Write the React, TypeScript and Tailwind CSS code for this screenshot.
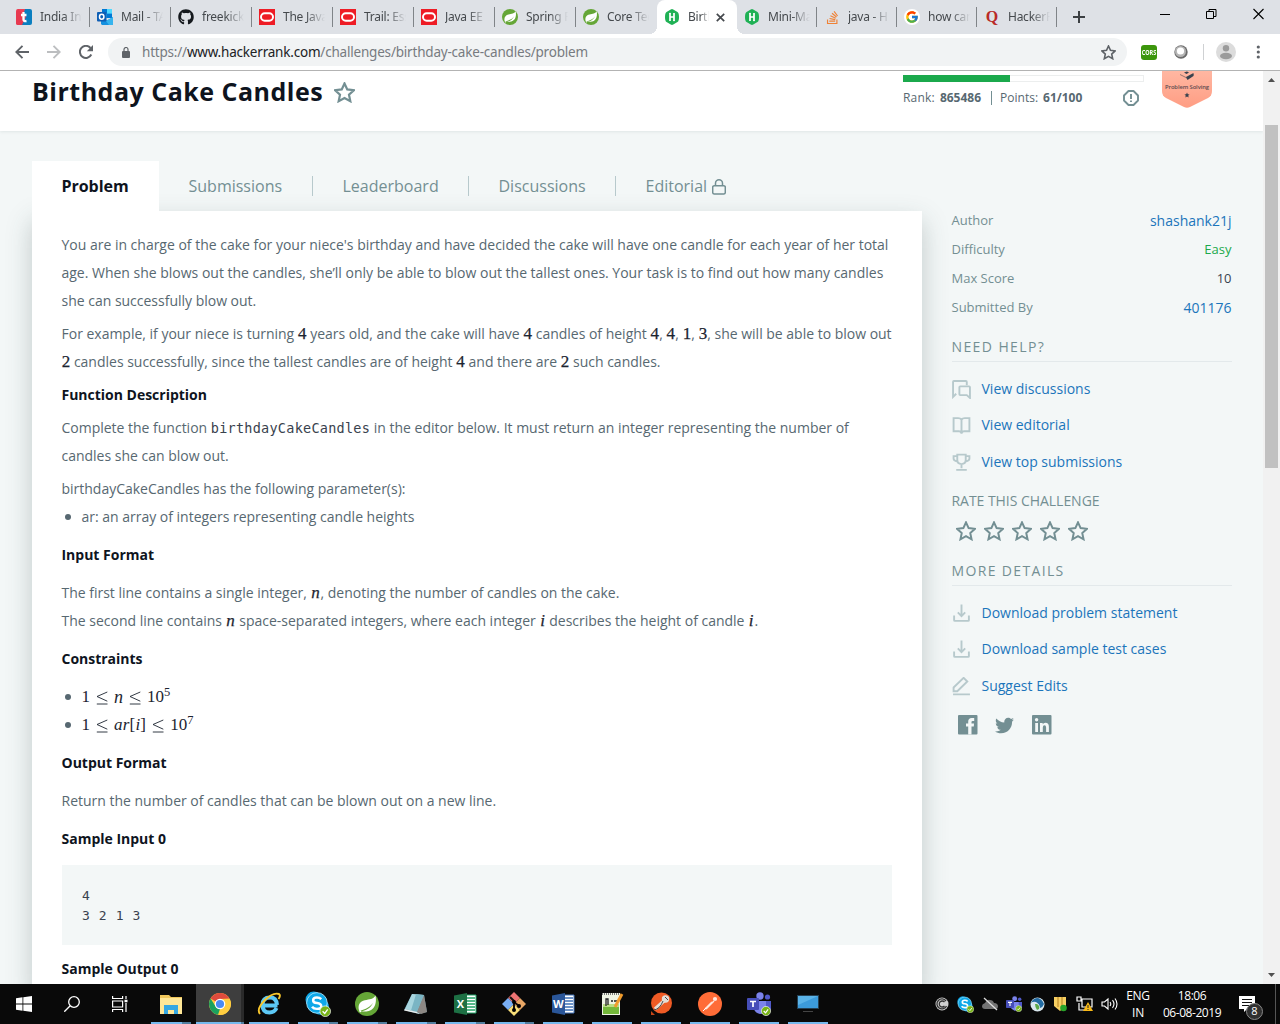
import React from "react";
import { FcGoogle } from "react-icons/fc";
import { FaGithub, FaStackOverflow, FaTwitter } from "react-icons/fa";
import type { ReactNode } from "react";

const OracleIcon = () => (
  <svg width="16" height="16" viewBox="0 0 16 16">
    <rect width="16" height="16" fill="#ee1c25" />
    <rect x="2" y="4.300" width="12" height="7.400" rx="3.700" fill="none" stroke="#fff" strokeWidth="2" />
  </svg>
);

const LeafIcon = ({ size = 16 }: { size?: number }) => (
  <svg width={size} height={size} viewBox="0 0 24 24">
    <circle cx="12" cy="12" r="12" fill="#65a637" />
    <path d="M20.500 3.500c.9 4.500.6 9.500-2.300 12.800-3.400 3.900-8.700 3.200-13.200 3.200 6.500-.7 10.500-3.500 13.200-8.800-3.300 4.300-7 6.300-14 8.200C2.300 13 5 9.300 9.800 8.200 14.500 7.300 18.300 7.300 20.500 3.500z" fill="#fff" />
    <circle cx="5.300" cy="19.300" r="1" fill="#fff" />
  </svg>
);

const HackerIcon = () => (
  <svg width="16" height="16" viewBox="0 0 16 16">
    <path d="M8 0q.7 0 5.500 2.900Q15 3.800 15 8t-1.500 5.100Q8.700 16 8 16t-5.500-2.900Q1 12.200 1 8t1.500-5.100Q7.300 0 8 0z" fill="#1fb155" />
    <path d="M6 4v8M10 4v8M6 8h4" stroke="#fff" strokeWidth="1.700" fill="none" />
    <path d="M4.800 4.800L6 3.400l1.200 1.400M8.800 11.200l1.200 1.400 1.200-1.400" fill="#fff" />
  </svg>
);

const TimesIcon = () => (
  <svg width="16" height="16" viewBox="0 0 16 16">
    <path d="M0 2q0-2 2-2h7L8 16H2q-2 0-2-2z" fill="#ef4056" />
    <path d="M9 0h5q2 0 2 2v12q0 2-2 2H4z" fill="#0b7fc0" />
    <path d="M2 0L0 4v10q0 2 2 2h4l4-8z" fill="#e73950" />
    <path d="M7.500 3v7.500q0 2 3 1.500M5 6h5.500" stroke="#fff" strokeWidth="2.300" fill="none" />
  </svg>
);

const OutlookIcon = () => (
  <svg width="17" height="16" viewBox="0 0 17 16" className="shrink-0">
    <path d="M5 0h10v9H5z" fill="#28a8ea" />
    <path d="M5 0h5v4.500H5zM10 4.500h5V9h-5z" fill="#0078d4" />
    <path d="M10 0h5v4.500h-5z" fill="#50d9ff" />
    <path d="M4 15V8l6 3.500L16 8v7q0 1-1 1H5z" fill="#1490df" />
    <path d="M16 8v7q0 1-1 1h-3l-3-4z" fill="#36b4ee" />
    <rect y="3" width="9.500" height="9.500" rx="1" fill="#0f5fb5" />
    <ellipse cx="4.700" cy="7.700" rx="2.200" ry="2.500" fill="none" stroke="#fff" strokeWidth="1.500" />
  </svg>
);

const tabs: { label: string; icon: ReactNode; active?: boolean; noSep?: boolean; narrow?: boolean }[] = [
  { label: "India Int", icon: <TimesIcon /> },
  { label: "Mail - TA", icon: <OutlookIcon /> },
  { label: "freekick", icon: <FaGithub size={16} color="#15191d" /> },
  { label: "The Java", icon: <OracleIcon /> },
  { label: "Trail: Ess", icon: <OracleIcon /> },
  { label: "Java EE", icon: <OracleIcon /> },
  { label: "Spring F", icon: <LeafIcon /> },
  { label: "Core Tec", icon: <LeafIcon />, noSep: true },
  { label: "Birth", icon: <HackerIcon />, active: true, noSep: true, narrow: true },
  { label: "Mini-Ma", icon: <HackerIcon />, narrow: true },
  { label: "java - H", icon: <FaStackOverflow size={15} color="#ef8236" />, narrow: true },
  { label: "how can", icon: <span className="flex size-4 items-center justify-center rounded-full bg-white"><FcGoogle size={14} /></span>, narrow: true },
  { label: "HackerR", icon: <span className="w-4 text-center font-['Liberation_Serif',serif] text-[16px] leading-4 font-bold text-[#b92b27]">Q</span>, narrow: true },
];

const TabStrip = () => (
  <div className="relative flex h-[34px] shrink-0 bg-[#dee1e6] pl-[9px]">
    {tabs.map((t, i) => (
      <div key={i} className={`relative flex h-[34px] shrink-0 items-center pl-[7px] ${t.narrow ? "w-[80px]" : "w-[81px]"} ${t.active ? "rounded-t-lg bg-white" : ""}`}>
        {t.active && (
          <>
            <span className="absolute bottom-0 -left-2 size-2 bg-[radial-gradient(circle_at_0_0,transparent_8px,#fff_8px)]" />
            <span className="absolute -right-2 bottom-0 size-2 bg-[radial-gradient(circle_at_100%_0,transparent_8px,#fff_8px)]" />
          </>
        )}
        <span className="flex w-4 shrink-0 justify-center">{t.icon}</span>
        <span className={`ml-2 overflow-hidden text-[12px] tracking-[-0.25px] whitespace-nowrap text-[#45494d] ${t.active ? "w-[21px] [mask-image:linear-gradient(to_right,black_60%,transparent)]" : "w-[42px] [mask-image:linear-gradient(to_right,black_55%,transparent)]"}`}>{t.label}</span>
        {t.active && (
          <svg className="ml-[7px]" width="9" height="9" viewBox="0 0 9 9"><path d="M.8.8l7.400 7.400M8.200.8L.8 8.200" stroke="#45494d" strokeWidth="1.700" /></svg>
        )}
        {!t.noSep && <span className="absolute top-[7px] right-0 h-5 w-px bg-[#808488]" />}
      </div>
    ))}
    <svg className="mt-[11px] ml-4" width="12" height="12" viewBox="0 0 12 12"><path d="M6 0v12M0 6h12" stroke="#3c4043" strokeWidth="2" /></svg>
    <div className="absolute top-2 right-4 flex items-center gap-[36px]">
      <svg width="10" height="12" viewBox="0 0 10 12"><path d="M0 6.500h10" stroke="#000" /></svg>
      <svg width="11" height="12" viewBox="0 0 11 12"><path d="M.5 3.500h7v7h-7zM3 3.500V1.500h7v7H8" fill="none" stroke="#000" /></svg>
      <svg width="11" height="12" viewBox="0 0 11 12"><path d="M.5 1l10 10M10.500 1l-10 10" stroke="#000" strokeWidth="1.100" /></svg>
    </div>
  </div>
);

const STAR = "M12 2.500l2.900 6.300 6.900.8-5.100 4.700 1.400 6.800L12 17.700l-6.100 3.400 1.400-6.800-5.100-4.700 6.900-.8z";

const Star = ({ size, color, w = 2 }: { size: number; color: string; w?: number }) => (
  <svg width={size} height={size} viewBox="1 1 22 22" fill="none" stroke={color} strokeWidth={w}><path d={STAR} /></svg>
);

const AddressBar = () => (
  <div className="flex h-9 shrink-0 items-center bg-white">
    <svg className="ml-[15px]" width="14" height="14" viewBox="0 0 14 14" fill="none" stroke="#5f6368" strokeWidth="1.900"><path d="M14 7H1.500M7.500.8L1.300 7l6.200 6.200" /></svg>
    <svg className="ml-[18px]" width="14" height="14" viewBox="0 0 14 14" fill="none" stroke="#bcbec0" strokeWidth="1.900"><path d="M0 7h12.500M6.500.8L12.700 7l-6.200 6.200" /></svg>
    <svg className="ml-[18px]" width="14" height="14" viewBox="0 0 14 14"><path d="M12.300 9.500A6 6 0 1 1 11.500 3" fill="none" stroke="#5f6368" strokeWidth="2" /><path d="M14 0v6.200H7.800z" fill="#5f6368" /></svg>
    <div className="ml-[15px] flex h-7 w-[1019px] items-center rounded-full bg-[#f1f3f4] pl-[14px]">
      <svg width="8" height="11" viewBox="0 0 8 11"><rect y="4" width="8" height="7" rx="1" fill="#5f6368" /><path d="M2 4V2.500a2 2 0 0 1 4 0V4" fill="none" stroke="#5f6368" strokeWidth="1.200" /></svg>
      <span className="ml-3 text-[13.500px] tracking-[-0.2px] whitespace-nowrap text-[#777b80]">https://<span className="text-[#202124]">www.hackerrank.com</span>/challenges/birthday-cake-candles/problem</span>
      <span className="mr-[11px] ml-auto"><Star size={15} color="#5f6368" w={2.4} /></span>
    </div>
    <span className="ml-[14px] flex h-[15px] w-4 items-center justify-center rounded-[3px] bg-[#3c960c] text-white"><span className="scale-y-[1.4] text-[5.500px] font-bold">CORS</span></span>
    <svg className="ml-[17px]" width="14" height="14" viewBox="0 0 14 14"><circle cx="7" cy="7" r="6.700" fill="#6b6b6b" /><circle cx="6.500" cy="6.500" r="5.500" fill="#b5b5b5" /><circle cx="6.500" cy="6" r="3.600" fill="#fff" /></svg>
    <span className="ml-[15px] h-4 w-px bg-[#cfd1d3]" />
    <svg className="ml-3" width="20" height="20" viewBox="0 0 20 20"><circle cx="10" cy="10" r="10" fill="#dcdcdc" /><circle cx="10" cy="6.300" r="3.200" fill="#9b9b9b" /><ellipse cx="10" cy="14" rx="6" ry="3.200" fill="#9b9b9b" /></svg>
    <svg className="ml-5" width="4" height="14" viewBox="0 0 4 14" fill="#5f6368"><circle cx="2.300" cy="2" r="1.600" /><circle cx="2.300" cy="7" r="1.600" /><circle cx="2.300" cy="12" r="1.600" /></svg>
  </div>
);

const Header = () => (
  <div className="flex h-[60px] items-start bg-white pl-8 shadow-[0_1px_3px_rgba(60,90,90,0.1)]">
    <h1 className="mt-[3px] w-[291px] text-[25px] leading-[34px] font-bold tracking-[0.5px] whitespace-nowrap text-[#0e141e]">Birthday Cake Candles</h1>
    <span className="mt-[11px] ml-[10.500px]"><Star size={21} color="#738f93" w={2.3} /></span>
    <div className="mt-1 ml-auto w-[241px]">
      <div className="h-[7px] border border-[#eceeee] bg-white"><div className="-mt-px -ml-px h-[7px] w-[107px] bg-[#1ba94c]" /></div>
      <div className="mt-[7px] flex h-[18px] items-center text-[12px] whitespace-nowrap text-[#576871]">
        <span className="tracking-[0.2px]">Rank:</span><b className="ml-[5px] font-bold">865486</b>
        <span className="mr-2 ml-[10px] h-[14px] w-px bg-[#738f93]" />
        <span>Points:</span><b className="ml-[5px] font-bold">61/100</b>
        <svg className="mr-[5px] ml-auto" width="16" height="16" viewBox="0 0 16 16" fill="none" stroke="#738f93" strokeWidth="1.900"><path d="M5.500 1h5l4.500 4.500v5L10.500 15h-5L1 10.500v-5z" strokeLinejoin="round" /><path d="M8 4v5M8 10.500V12" /></svg>
      </div>
    </div>
    <svg className="mr-[51px] ml-[18px]" width="50" height="37" viewBox="0 0 50 37">
      <defs><linearGradient id="badge" x1="0" y1="0" x2="0" y2="1"><stop offset="0" stopColor="#ffb7a2" /><stop offset="1" stopColor="#ff9d83" /></linearGradient></defs>
      <path d="M0 0h50v20q0 5-4 7L28 36q-3 1.500-6 0L4 27q-4-2-4-7z" fill="url(#badge)" />
      <path d="M18 3.500l8 4 6-4" fill="none" stroke="#7d6462" strokeWidth=".8" />
      <path d="M24 6l7.500-4v3l-6 4z" fill="#39424e" /><path d="M22 1.500l3-1 2 1-2.500 1.500z" fill="#39424e" />
      <text x="3" y="18" fontFamily="Open Sans, sans-serif" fontSize="5.800" fontWeight="600" textLength="44" fill="#5b4a50">Problem Solving</text>
      <path d="M25 21.500l.8 1.700 1.800.2-1.300 1.200.3 1.800-1.600-.9-1.600.9.300-1.800-1.300-1.200 1.800-.2z" fill="#39424e" />
    </svg>
  </div>
);

const M = ({ children, i = false }: { children: ReactNode; i?: boolean }) => (
  <span className={`inline-block font-['Liberation_Serif',serif] text-[17px] leading-5 text-[#1c2430] [-webkit-text-stroke:0.25px_#1c2430] ${i ? "px-[0.800px] italic" : "px-[0.150px]"}`}>{children}</span>
);

const H = ({ children, className = "" }: { children: ReactNode; className?: string }) => (
  <h3 className={`font-bold whitespace-nowrap text-[#0e141e] ${className}`}>{children}</h3>
);

const Bullet = ({ children }: { children: ReactNode }) => (
  <li className="flex h-7 items-center"><span className="mr-[11px] ml-[3px] size-[6px] rounded-full bg-[#576871]" />{children}</li>
);

const Leq = () => (
  <svg className="mx-[6px] mt-px shrink-0" width="12" height="14" viewBox="0 0 12 14" fill="none" stroke="#1c2430" strokeWidth=".9"><path d="M11.300 1L1 5.500l10.300 4.700M.8 13h10.700" /></svg>
);

const Formula = ({ children, power }: { children: ReactNode; power: string }) => (
  <span className="flex items-center font-['Liberation_Serif',serif] text-[17px] text-[#1c2430]">
    1<Leq />{children}<Leq />10<span className="mb-[9px] text-[12.500px] leading-none">{power}</span>
  </span>
);

const ProblemCard = () => (
  <div className="h-[780px] w-[890px] bg-white pt-5 pr-[30px] pl-[29.500px] text-[14px] leading-7 tracking-[-0.01px] whitespace-nowrap text-[#576871] shadow-[0_10px_24px_rgba(50,75,75,0.26)]">
    <p>
      <span className="block">You are in charge of the cake for your niece's birthday and have decided the cake will have one candle for each year of her total</span>
      <span className="block">age. When she blows out the candles, she’ll only be able to blow out the tallest ones. Your task is to find out how many candles</span>
      <span className="block">she can successfully blow out.</span>
    </p>
    <p className="mt-[5px]">
      <span className="block h-7">For example, if your niece is turning <M>4</M> years old, and the cake will have <M>4</M> candles of height <M>4</M>, <M>4</M>, <M>1</M>, <M>3</M>, she will be able to blow out</span>
      <span className="block h-7"><M>2</M> candles successfully, since the tallest candles are of height <M>4</M> and there are <M>2</M> such candles.</span>
    </p>
    <H className="mt-[5px]">Function Description</H>
    <p className="mt-[5px]">
      <span className="block h-7">Complete the function <code className="font-['DejaVu_Sans_Mono',monospace] text-[13.500px] tracking-[0.26px] text-[#39424e]">birthdayCakeCandles</code> in the editor below. It must return an integer representing the number of</span>
      <span className="block h-7">candles she can blow out.</span>
    </p>
    <p className="mt-[5px]">birthdayCakeCandles has the following parameter(s):</p>
    <ul><Bullet>ar: an array of integers representing candle heights</Bullet></ul>
    <H className="mt-[10px]">Input Format</H>
    <p className="mt-[10px]">
      <span className="block h-7">The first line contains a single integer, <M i>n</M>, denoting the number of candles on the cake.</span>
      <span className="block h-7">The second line contains <M i>n</M> space-separated integers, where each integer <M i>i</M> describes the height of candle <M i>i</M>.</span>
    </p>
    <H className="mt-[10px]">Constraints</H>
    <ul className="mt-[10px]">
      <Bullet><Formula power="5"><i className="text-[18px]">n</i></Formula></Bullet>
      <Bullet><Formula power="7"><span className="flex items-center tracking-[0.2px]"><i>ar</i>[<i>i</i>]</span></Formula></Bullet>
    </ul>
    <H className="mt-[10px]">Output Format</H>
    <p className="mt-[10px]">Return the number of candles that can be blown out on a new line.</p>
    <H className="mt-[10px]">Sample Input 0</H>
    <pre className="mt-3 ml-[0.500px] h-20 bg-[#f3f7f7] px-5 pt-[21px] font-['DejaVu_Sans_Mono',monospace] text-[13px] leading-5 tracking-[0.580px] text-[#39424e]">{"4\n3 2 1 3"}</pre>
    <H className="mt-[10px]">Sample Output 0</H>
  </div>
);

const navTabs = [
  { label: "Submissions", cls: "w-[154px]" },
  { label: "Leaderboard", cls: "w-[156px]" },
  { label: "Discussions", cls: "w-[147px]" },
];

const TabNav = () => (
  <div className="relative z-10 flex h-[50px] w-[890px] text-[16px] leading-[50px] text-[#738f93]">
    <div className="w-[127px] bg-white pl-[29.500px] font-bold tracking-[-0.050px] text-[#0e141e]">Problem</div>
    {navTabs.map((t) => (
      <div key={t.label} className={`flex items-center justify-between pl-[29.500px] ${t.cls}`}><span>{t.label}</span><span className="h-5 w-px bg-[#b7c9cc]" /></div>
    ))}
    <div className="flex items-center pl-[29.500px]">Editorial
      <svg className="mt-px ml-[4.500px]" width="14" height="16" viewBox="0 0 14 16" fill="none" stroke="#738f93" strokeWidth="1.500"><rect x=".7" y="6.700" width="12.600" height="8.300" rx="1.500" /><path d="M3.500 6.500V4.300a3.500 3.500 0 0 1 7 0v2.200" /></svg>
    </div>
  </div>
);

const ico = { width: 19, height: 19, viewBox: "0 0 18 18", fill: "none", stroke: "#b7c9cc", strokeWidth: 1.8 };
const ChatIcon = () => <svg {...ico}><path d="M4 13l-3 3V1.800Q1 1 1.800 1h11.400q.8 0 .8.800V5" /><path d="M7.800 6h8.400q.8 0 .8.800V17l-3-2.700H7.800q-.8 0-.8-.8V6.800Q7 6 7.800 6z" /></svg>;
const BookIcon = () => <svg {...ico}><path d="M9 3.500Q8 2 6 2H1.500v12.500h5q2 0 2.500 2 .5-2 2.500-2h5V2H12Q10 2 9 3.500zM9 3v12" /></svg>;
const TrophyIcon = () => <svg {...ico}><path d="M5 1.500h8v5q0 4-4 4t-4-4zM5 3H1.500v2.500q0 2 3.500 2.500M13 3h3.500v2.500q0 2-3.500 2.500M9 10.500v4M4 16h10" /></svg>;
const DownloadIcon = () => <svg {...ico}><path d="M9 .5v11M5.500 8L9 11.500 12.500 8M2 11v4.300q0 .7.7.7h12.600q.7 0 .7-.7V11" /></svg>;
const PencilIcon = () => <svg {...ico}><path d="M1.500 10L11 .8l3.500 3.500-9.500 9.200H1.500zM1 16.500h16" /></svg>;

const SideLink = ({ icon, children, className = "" }: { icon: ReactNode; children: ReactNode; className?: string }) => (
  <a className={`flex h-5 items-center text-[14px] text-[#1b75bb] ${className}`}><span className="mr-[11px] w-[19px]">{icon}</span><span className="pb-[2px]">{children}</span></a>
);

const details: [string, string, string][] = [
  ["Author", "shashank21j", "text-[14px] text-[#1b75bb]"],
  ["Difficulty", "Easy", "text-[13px] text-[#1ba94c]"],
  ["Max Score", "10", "text-[13px] text-[#39424e]"],
  ["Submitted By", "401176", "text-[14px] text-[#1b75bb]"],
];

const Sidebar = () => (
  <aside className="mt-[45px] ml-[29.500px] w-[280.500px] whitespace-nowrap text-[#738f93]">
    {details.map(([k, v, c]) => (
      <div key={k} className="flex h-[29px] items-center justify-between pr-[0.500px] text-[13px]"><span>{k}</span><span className={c}>{v}</span></div>
    ))}
    <h4 className="mt-[15px] h-[25px] border-b border-[#e3e9eb] text-[14px] leading-5 tracking-[1.400px]">NEED HELP?</h4>
    <SideLink className="mt-[17px]" icon={<ChatIcon />}>View discussions</SideLink>
    <SideLink className="mt-4" icon={<BookIcon />}>View editorial</SideLink>
    <SideLink className="mt-[17px]" icon={<TrophyIcon />}>View top submissions</SideLink>
    <h4 className="mt-[19px] h-5 text-[14px] leading-5 tracking-[-0.040px]">RATE THIS CHALLENGE</h4>
    <div className="mt-[10px] ml-1 flex h-5 gap-2">{[0, 1, 2, 3, 4].map((n) => <Star key={n} size={20} color="#738f93" w={2.2} />)}</div>
    <h4 className="mt-[20px] h-[25px] border-b border-[#e3e9eb] text-[14px] leading-5 tracking-[1.350px]">MORE DETAILS</h4>
    <SideLink className="mt-[17px]" icon={<DownloadIcon />}>Download problem statement</SideLink>
    <SideLink className="mt-4" icon={<DownloadIcon />}>Download sample test cases</SideLink>
    <SideLink className="mt-[17px]" icon={<PencilIcon />}>Suggest Edits</SideLink>
    <div className="mt-[19px] ml-[6px] flex h-5 items-center">
      <svg width="20" height="20" viewBox="0 0 20 20"><rect width="19.500" height="19.500" rx="1" fill="#738f93" /><path d="M15.800 11.500h-2.300V19.500h-3.300v-8H8V8.600h2.200V6.500q0-3.500 3.500-3.500h2.500v2.900h-1.600q-1.100 0-1.100 1v1.700H16z" fill="#f3f7f7" /></svg>
      <span className="ml-[17px]"><FaTwitter size={19} color="#738f93" /></span>
      <svg className="ml-[18px]" width="20" height="20" viewBox="0 0 20 20"><rect width="19.500" height="19.500" rx="1" fill="#738f93" /><path d="M3.200 8H6v9H3.200zM8 8h2.700v1.300Q11.500 7.800 13.400 7.800q3.500 0 3.500 4V17h-2.800v-4.600q0-2.100-1.600-2.100-1.700 0-1.700 2.200V17H8z" fill="#f3f7f7" /><circle cx="4.600" cy="4.800" r="1.700" fill="#f3f7f7" /></svg>
    </div>
  </aside>
);

const t32 = { width: 24, height: 24, viewBox: "0 0 24 24" };
const Check = ({ x, y, r }: { x: number; y: number; r: number }) => (
  <g><circle cx={x} cy={y} r={r} fill="#78b317" stroke="#fff" strokeWidth=".6" /><path d={`M${x - r / 2} ${y}l${r / 2.5} ${r / 2.5}l${r / 1.8} -${r / 1.3}`} stroke="#fff" strokeWidth="1.2" fill="none" /></g>
);
const ChromeIcon = () => (
  <svg {...t32}><circle cx="12" cy="12" r="11" fill="#ffcd40" /><path d="M12 12L2.500 6.500A11 11 0 0 1 21.500 6.500L12 7z" fill="#de4b3d" /><path d="M2.500 6.500L7.700 14.500 12 17 10 22.800A11 11 0 0 1 2.500 6.500z" fill="#1aa15f" /><path d="M12 7h9.600A11 11 0 0 1 10.500 22.900L16.300 14.500z" fill="#ffcd40" /><circle cx="12" cy="12" r="5.300" fill="#fff" /><circle cx="12" cy="12" r="4.100" fill="#4a8af4" /></svg>
);
const SkypeIcon = ({ size = 26 }: { size?: number }) => (
  <svg width={size} height={size} viewBox="0 0 24 24"><circle cx="8" cy="8" r="7.500" fill="#0fa8e8" /><circle cx="14.500" cy="14.500" r="7.500" fill="#0fa8e8" /><circle cx="11" cy="11" r="9.500" fill="#0fa8e8" stroke="#aee6fb" strokeWidth=".8" /><path d="M15 7.500Q13.500 6 11 6 7.500 6 7.500 8.500t3.500 2.500q4 .5 4 3t-4 2.500q-3 0-4.500-2" stroke="#fff" strokeWidth="2.300" fill="none" /><Check x={18.700} y={18.700} r={4.900} /></svg>
);
const TeamsIcon = ({ size = 24 }: { size?: number }) => (
  <svg width={size} height={size} viewBox="0 0 24 24"><circle cx="13" cy="4" r="3.700" fill="#7b83eb" /><circle cx="20.500" cy="5" r="2.600" fill="#5059c9" /><path d="M16 9h8v8q-1 3-5 3z" fill="#5059c9" /><path d="M7 9h12v8q-1 5-6 5-5-1-6-5z" fill="#7b83eb" /><rect x="0" y="6" width="12" height="12" rx="1" fill="#464eb8" /><path d="M3 9.500h6M6 9.500V15" stroke="#fff" strokeWidth="1.700" /><Check x={19} y={19} r={4.600} /></svg>
);
const Office = ({ letter, dark, light }: { letter: string; dark: string; light: string }) => (
  <svg {...t32}><path d="M12 3h11v18H12z" fill="#fff" stroke={light} strokeWidth="1" /><path d="M14 6h8M14 9h8M14 12h8M14 15h8M14 18h8" stroke={light} strokeWidth="1.700" /><path d="M1 3.500L14 1v22L1 20.500z" fill={dark} /><text x="7.300" y="16" textAnchor="middle" fontFamily="Open Sans, sans-serif" fontWeight="700" fontSize="11" fill="#fff">{letter}</text></svg>
);
const apps: { icon: ReactNode; multi?: boolean; active?: boolean }[] = [
  { multi: true, icon: <svg {...t32}><path d="M1 3h9l2 2h11v17H1z" fill="#f0c75b" /><path d="M1 6h22v16H1z" fill="#ffe797" /><path d="M5 13h14v9h-4v-4H9v4H5z" fill="#35a7e2" /></svg> },
  { active: true, icon: <ChromeIcon /> },
  { icon: <svg {...t32}><path d="M20.500 13.500H7.500M19.500 16q-2 4.500-7 4.500-7 0-7-7.500T13 5.500q6.500 0 7 7.500" fill="none" stroke="#5cc8f5" strokeWidth="4" /><path d="M3 22Q-1 17 8 8 16 0 22 2q2 1.500-.5 5" fill="none" stroke="#f8c62b" strokeWidth="1.900" /></svg> },
  { multi: true, icon: <SkypeIcon /> },
  { multi: true, icon: <LeafIcon size={24} /> },
  { multi: true, icon: <svg {...t32}><path d="M8 2l12 1 3 17-8 2L0 18z" fill="#5b8c9c" /><path d="M8 2l12 1-7 17-12-3z" fill="#a8d6df" /><path d="M12 2.300l8 .7-7 17-6-1.500z" fill="#7ab5c4" /><path d="M1 17l12 3 3 2-16-3.500z" fill="#e9eeee" /><path d="M20 3l3 17-6 2-4-2z" fill="#8d8884" /></svg> },
  { multi: true, icon: <Office letter="X" dark="#1d7044" light="#21a366" /> },
  { multi: true, icon: <svg {...t32}><path d="M12 0l6 6-6 6-6-6z" fill="#ed7373" /><path d="M0 12l6-6 6 6-6 6z" fill="#78aef4" /><path d="M12 12l6-6 6 6-6 6z" fill="#e8a665" /><path d="M6 18l6-6 6 6-6 6z" fill="#f8de78" /><path d="M8 5l4 4v10M12 10l5 4" stroke="#17100c" strokeWidth="2" fill="none" /><circle cx="12" cy="10" r="2" /><circle cx="12" cy="18" r="2" /><circle cx="17" cy="14" r="2" /></svg> },
  { icon: <Office letter="W" dark="#2a5699" light="#3e70b7" /> },
  { icon: <svg {...t32}><path d="M2 1h18v22H2z" fill="#eff4e4" /><path d="M3 14h16v8H3z" fill="#74b83a" /><path d="M3 12h16v3H3z" fill="#b9dd84" /><path d="M2 2h18" stroke="#777" strokeDasharray="1 1" strokeWidth="2" /><path d="M6 14V7h2v6M11 9h2M14 9h3" stroke="#222" strokeWidth="1.300" fill="none" /><path d="M22 2l-7 13" stroke="#f09b2c" strokeWidth="3" /></svg> },
  { icon: <svg {...t32}><circle cx="12.500" cy="11" r="10.500" fill="#ef5b25" /><path d="M6 17l10-9" stroke="#e4ded7" strokeWidth="3.500" /><circle cx="16.500" cy="7" r="3.700" fill="#e4ded7" /><path d="M5 18q6-1 9-9M16 5l3 3" stroke="#49484a" fill="none" /><path d="M2 19l4 4H2z" fill="#c54518" /></svg> },
  { icon: <svg {...t32}><circle cx="12" cy="12" r="12" fill="#ff6c37" /><path d="M7 17l7-7M8 17l8-8" stroke="#ffe6dc" strokeWidth="1.500" /><circle cx="17" cy="7" r="2.100" fill="#ffe6dc" /><path d="M5 19l3-3" stroke="#fff" /></svg> },
  { icon: <TeamsIcon /> },
  { icon: <svg {...t32}><path d="M1 3h22v14H1z" fill="#243f51" /><path d="M2 4h20v12H2z" fill="#3c9bdb" /><path d="M2 4h20L2 13z" fill="#5ab3e8" /><path d="M7 19.500h10" stroke="#444" /></svg> },
];

const Taskbar = () => (
  <div className="relative z-20 flex h-10 shrink-0 bg-[#090909] text-white">
    <div className="flex w-12 items-center justify-center"><svg width="16" height="16" viewBox="0 0 16 16" fill="#fff"><path d="M0 2.200L6.500 1.300V7.600H0zM7.300 1.200L16 0v7.600H7.300zM0 8.400h6.500v6.300L0 13.800zM7.300 8.400H16V16l-8.700-1.200z" /></svg></div>
    <div className="flex w-12 items-center justify-center"><svg width="16" height="16" viewBox="0 0 16 16" fill="none" stroke="#fff" strokeWidth="1.300"><circle cx="10" cy="6" r="5.300" /><path d="M6.200 9.800L.3 15.700" /></svg></div>
    <div className="flex w-[51px] items-center justify-center pr-[3px]"><svg width="16" height="16" viewBox="0 0 16 16" fill="none" stroke="#fff" strokeWidth="1.200"><path d="M.6 0v2.500h10V0M.6 16v-2.500h10V16M.6 5h10v6H.6zM14 0v3M14 7v9" /><path d="M12.500 5h3" strokeWidth="2.500" /></svg></div>
    {apps.map((a, i) => (
      <div key={i} className="relative flex w-[49px] items-center justify-center pr-[2px]">
        {a.active && <span className="absolute inset-y-0 left-0 w-12 border-r-[3px] border-[#2a2a2a] bg-[#3e3e3e]" />}
        <span className="relative">{a.icon}</span>
        <span className={`absolute bottom-0 h-[2px] bg-[#76b9ed] ${a.active ? "left-0 w-12" : "left-1 w-10"}`}>
          {(a.multi || a.active) && <span className={`absolute right-0 h-[2px] bg-[#527e9f] ${a.active ? "w-[3px]" : "w-[9px]"}`} />}
        </span>
      </div>
    ))}
    <div className="ml-auto flex items-center">
      <div className="mr-px flex items-center gap-2">
        <svg width="14" height="14" viewBox="0 0 14 14"><circle cx="7" cy="7" r="6.500" fill="#d0d0d0" /><path d="M11 4A5 5 0 1 0 11.500 9M9.500 5A3 3 0 1 0 9.500 9" fill="none" stroke="#333" strokeWidth="1.300" /></svg>
        <SkypeIcon size={17} />
        <svg width="16" height="14" viewBox="0 0 16 14"><path d="M3 12q-3 0-3-3 0-2 3-3 2-4 5-3 3 0 4 3 4 0 4 3.500 0 2.500-3 2.500z" fill="#737373" /><path d="M2 1l13 12" stroke="#ddd" strokeWidth="1.300" /></svg>
        <TeamsIcon size={16} />
        <svg width="15" height="15" viewBox="0 0 15 15"><circle cx="7.500" cy="7.500" r="7" fill="#d9e7ed" /><path d="M1 6q2-5 7-5 4 1 6 6-1 3-4 4 0-4-4-6-3-1-5 1z" fill="#236ca3" /><path d="M7 7q3 2 2 5l-2 1Q5 10 5 7z" fill="#5da949" /></svg>
        <svg width="15" height="16" viewBox="0 0 15 16"><path d="M1 1h12v9l-6 5-6-5z" fill="#f6cf62" /><path d="M5 1v10M9 1v10" stroke="#b47e1e" strokeWidth="1" /><circle cx="10.500" cy="12" r="3.300" fill="#28a329" /></svg>
        <svg width="17" height="16" viewBox="0 0 17 16"><path d="M3 7v7h5M1 1h4v4H1zM6 3h10v8H6z" fill="none" stroke="#fff" strokeWidth="1.200" /><path d="M12 6l5 9H7z" fill="#f9b916" /><path d="M12 9v3M12 13v1" stroke="#222" /></svg>
        <svg width="17" height="14" viewBox="0 0 17 14" fill="none" stroke="#fff" strokeWidth="1.100"><path d="M1 5h2.500L7 2v10L3.500 9H1zM9 5q1.500 2 0 4M11.500 3.200q3 3.800 0 7.600M14 1.500q4 5.500 0 11" /></svg>
      </div>
      <div className="ml-[6px] w-[26px] text-center text-[12px] leading-[17px] tracking-[-0.3px]">ENG<br />IN</div>
      <div className="ml-2 w-[66px] text-center text-[12px] leading-[17px] tracking-[-0.450px] whitespace-nowrap">18:06<br />06-08-2019</div>
      <div className="relative ml-[14px] h-[17px] w-[36px]">
        <svg className="block" width="17" height="17" viewBox="0 0 17 17"><path d="M0 0h16v13H8l-3 3v-3H0z" fill="#fff" /><path d="M3 3.500h10M3 6.500h10M3 9.500h7" stroke="#111" /></svg>
        <span className="absolute top-[7px] left-[7px] flex size-[17px] items-center justify-center rounded-full border border-[#888] bg-[#303030] text-[11px]">8</span>
      </div>
      <span className="mr-[4px] h-10 w-px bg-[#555]" />
    </div>
  </div>
);

export default function App() {
  return (
    <div className="flex h-[1024px] w-[1280px] flex-col overflow-hidden bg-white font-['Open_Sans',sans-serif]">
      <div className="flex shrink-0 flex-col font-['Noto_Sans',sans-serif]"><TabStrip /><AddressBar /><div className="h-px bg-[#b3b3b3]" /></div>
      <div className="flex min-h-0 flex-1">
        <main className="h-full w-[1263px] overflow-hidden bg-[#f3f7f7]">
          <Header />
          <div className="flex items-start pl-8">
            <div className="pt-[30px]"><TabNav /><ProblemCard /></div>
            <div className="pt-[30px]"><Sidebar /></div>
          </div>
        </main>
        <div className="flex h-full w-[17px] flex-col items-center bg-[#f1f1f1]">
          <svg className="mt-[7px]" width="7" height="4" viewBox="0 0 7 4"><path d="M0 4l3.500-4L7 4z" fill="#505050" /></svg>
          <div className="mt-[43px] h-[343px] w-[13px] bg-[#c1c1c1]" />
          <svg className="mt-auto mb-[7px]" width="7" height="4" viewBox="0 0 7 4"><path d="M0 0l3.500 4L7 0z" fill="#505050" /></svg>
        </div>
      </div>
      <Taskbar />
    </div>
  );
}
